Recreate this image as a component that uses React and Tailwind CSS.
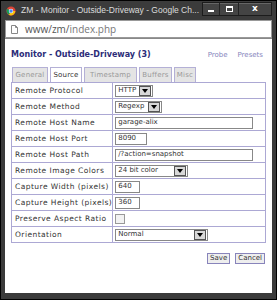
import React from "react";

const rows = [
  { label: "Remote Protocol", type: "select", value: "HTTP", w: "w-[38px]" },
  { label: "Remote Method", type: "select", value: "Regexp", w: "w-[47px]" },
  { label: "Remote Host Name", type: "input", value: "garage-alix", w: "w-[138px]" },
  { label: "Remote Host Port", type: "input", value: "8090", w: "w-[32px]" },
  { label: "Remote Host Path", type: "input", value: "/?action=snapshot", w: "w-[138px]" },
  { label: "Remote Image Colors", type: "select", value: "24 bit color", w: "w-[73px]" },
  { label: "Capture Width (pixels)", type: "input", value: "640", w: "w-[25px]" },
  { label: "Capture Height (pixels)", type: "input", value: "360", w: "w-[25px]" },
  { label: "Preserve Aspect Ratio", type: "check" },
  { label: "Orientation", type: "select", value: "Normal", w: "w-[93px]" },
];

const tabs = [
  { name: "General", w: "w-[36px]" },
  { name: "Source", w: "w-[32px]" },
  { name: "Timestamp", w: "w-[53px]" },
  { name: "Buffers", w: "w-[33px]" },
  { name: "Misc", w: "w-[22px]" },
];

const Chrome = () => (
  <svg width="10" height="10" viewBox="0 0 24 24">
    <circle cx="12" cy="12" r="11" fill="#db4437" />
    <path d="M12 12 L22.5 12 A10.5 10.5 0 0 1 6.7 21.1 Z" fill="#f4c20d" />
    <path d="M12 12 L6.7 21.1 A10.5 10.5 0 0 1 2.9 6.7 Z" fill="#0f9d58" />
    <circle cx="12" cy="12" r="5.4" fill="#fff" />
    <circle cx="12" cy="12" r="4.2" fill="#4285f4" />
  </svg>
);

const Arrow = () => (
  <span className="flex h-[10px] w-[12px] items-center justify-center border border-[#555] bg-[#d8d8d8]">
    <svg width="6" height="4" viewBox="0 0 6 4">
      <path d="M0 0h6L3 4z" fill="#000" />
    </svg>
  </span>
);

const Field = ({ row }) => {
  if (row.type === "check")
    return <span className="block h-[10px] w-[10px] border border-[#999] bg-[#f2f2f2]" />;
  if (row.type === "select")
    return (
      <span className={`flex h-[12px] items-center justify-between border border-[#888] bg-white pl-[2px] pr-[1px] ${row.w}`}>
        <span>{row.value}</span>
        <Arrow />
      </span>
    );
  return (
    <span className={`flex h-[12px] items-center border border-[#888] bg-white pl-[2px] ${row.w}`}>
      {row.value}
    </span>
  );
};

export default function App() {
  return (
    <div className="flex h-[300px] w-[277px] flex-col border border-black bg-[#3b3b3b] px-[4px] pb-[6px] font-['DejaVu_Sans',sans-serif]">
      {/* title bar */}
      <div className="relative flex h-[19px] shrink-0 items-center gap-[5px] pl-[1px]">
        <Chrome />
        <span className="font-['Liberation_Sans',sans-serif] text-[8.5px] leading-none whitespace-nowrap text-[#dcdcdc]">
          ZM - Monitor - Outside-Driveway - Google Ch...
        </span>
        <div className="absolute top-[1px] right-0 flex h-[14px] border border-[#1c1c1c] bg-[#444] shadow-[inset_0_1px_0_#666]">
          <span className="flex w-[17px] items-end justify-center border-r border-[#222] pb-[3px]">
            <span className="h-[2px] w-[6px] bg-white" />
          </span>
          <span className="flex w-[19px] items-center justify-center border-r border-[#222]">
            <span className="h-[6px] w-[7px] border border-t-2 border-white" />
          </span>
          <span className="flex w-[32px] items-center justify-center text-[9px] font-bold text-white">x</span>
        </div>
      </div>

      {/* address bar */}
      <div className="flex h-[18px] shrink-0 items-center gap-[7px] border border-[#999] bg-white pl-[5px]">
        <svg width="7" height="9" viewBox="0 0 7 9">
          <path d="M0.5 0.5h4l2 2v6h-6z M4.5 0.5v2h2" fill="#fff" stroke="#888" />
        </svg>
        <span className="font-['Open_Sans',sans-serif] text-[10px] text-[#555]">
          www/zm/<span className="text-[#777]">index.php</span>
        </span>
      </div>

      {/* page */}
      <div className="flex flex-1 flex-col border-t border-[#888] bg-white px-[6px] pt-[10px] text-[7px] text-[#333]">
        <div className="flex items-center justify-between pr-[3px]">
          <span className="text-[8px] font-bold text-[#2c2c78]">Monitor - Outside-Driveway (3)</span>
          <span className="flex gap-[10px] text-[#8686bd]">
            <span>Probe</span>
            <span>Presets</span>
          </span>
        </div>

        <div className="mt-[6px] flex gap-[2px] pl-[1px] tracking-[0.2px]">
          {tabs.map((t) => (
            <span
              key={t.name}
              className={`flex h-[15px] items-center justify-center border border-b-0 border-[#b4b0d6] ${t.w} ${
                t.name === "Source" ? "bg-white text-[#333]" : "bg-[#e4e4e4] text-[#999]"
              }`}
            >
              {t.name}
            </span>
          ))}
        </div>

        <table className="w-[255px] border-collapse border border-[#aca8d4]">
          <tbody>
            {rows.map((r) => (
              <tr key={r.label} className="h-[16px]">
                <td className="w-[101px] border border-[#aca8d4] pl-[3px] text-[7.5px] tracking-[0.45px] whitespace-nowrap">
                  {r.label}
                </td>
                <td className="border border-[#aca8d4] pl-[2px]">
                  <Field row={r} />
                </td>
              </tr>
            ))}
          </tbody>
        </table>

        <div className="mt-[10px] flex justify-end gap-[5px] pr-[1px]">
          <span className="border border-[#8884bb] bg-[#eee] px-[2px] leading-[9px]">Save</span>
          <span className="border border-[#8884bb] bg-[#eee] px-[2px] leading-[9px]">Cancel</span>
        </div>
      </div>
    </div>
  );
}
